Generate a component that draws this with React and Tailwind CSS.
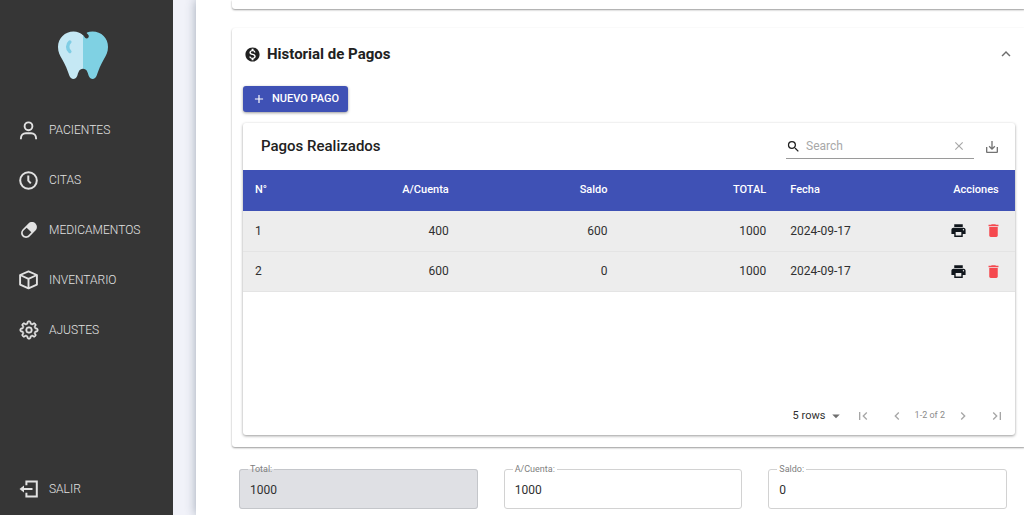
import { useState } from "react";
import { RiCapsuleFill } from "react-icons/ri";
import { GoGear } from "react-icons/go";
import {
  MdAdd,
  MdArrowDropDown,
  MdChevronLeft,
  MdChevronRight,
  MdClear,
  MdDelete,
  MdExpandLess,
  MdFirstPage,
  MdLastPage,
  MdMonetizationOn,
  MdPrint,
  MdSaveAlt,
  MdSearch,
} from "react-icons/md";

const PersonIcon = () => (
  <svg viewBox="0 0 20 20" className="size-5" fill="none" stroke="currentColor" strokeWidth="1.9">
    <circle cx="9.500" cy="6.300" r="3.900" />
    <path d="M1.900 19.300v-.800c0-3 2-5.200 5-5.200h5.200c3 0 5 2.200 5 5.200v.800" />
  </svg>
);

const ClockIcon = () => (
  <svg viewBox="0 0 20 20" className="size-5" fill="none" stroke="currentColor" strokeWidth="2">
    <circle cx="9.500" cy="10.500" r="8.300" />
    <path d="M9.300 5.500v5.200l2.500 2.700" />
  </svg>
);

const CubeIcon = () => (
  <svg viewBox="0 0 20 20" className="size-5" fill="none" stroke="currentColor" strokeWidth="1.9" strokeLinejoin="round">
    <path d="M9.500 1.400 17.900 5v9.600l-8.400 3.800-8.400-3.800V5z" />
    <path d="M1.100 5l8.400 3.800L17.900 5M9.500 8.800v9.600" />
  </svg>
);

const ExitIcon = () => (
  <svg viewBox="0 0 20 20" className="size-5" fill="none" stroke="currentColor" strokeWidth="2">
    <path d="M7.400 6.200V2.400h10.400v15.200H7.400v-3.800" />
    <path d="M4 10h9.500" />
    <path d="M5 6.400v7.200L.500 10z" fill="currentColor" stroke="none" />
  </svg>
);

const Logo = () => (
  <svg viewBox="0 0 52 50" className="h-[50px] w-[52px]">
    <path
      d="M26 5C23 3 20.500 1.500 16.500 1.500 8 1.500 1 8 1 17c0 5 1.800 8.500 4 12 3.300 5.500 5.500 11 7.300 16.500 1.500 4.500 6.300 4.500 7.900.500 1.200-3.500 1.800-7.200 5.800-7.200z"
      fill="#c5e8f4"
    />
    <path
      d="M26 5C28 3 31.500 1.500 35.500 1.500 44.500 1.500 51 8 51 17c0 5-1.800 8.500-4 12-3.300 5.500-5.500 11-7.300 16.500-1.500 4.500-6.300 4.500-7.900.500-1.200-3.500-1.800-7.200-5.800-7.200z"
      fill="#7fd1e3"
    />
    <path d="M24.500 3 26.500 0h5.500l-2.500 2.800c.500 1 1.700 1.500 2.200 2.700.700 2-1.500 3.800-3.400 2.500z" fill="#363636" />
    <path d="M12.800 12c-2.800 2.500-2.800 7 0 9.500" fill="none" stroke="#7fcde4" strokeWidth="3.500" strokeLinecap="round" />
  </svg>
);

const menu = [
  { label: "PACIENTES", icon: <PersonIcon /> },
  { label: "CITAS", icon: <ClockIcon /> },
  { label: "MEDICAMENTOS", icon: <RiCapsuleFill className="size-5" /> },
  { label: "INVENTARIO", icon: <CubeIcon /> },
  { label: "AJUSTES", icon: <GoGear className="size-5 stroke-current [stroke-width:0.7]" /> },
];

const pagos = [
  { id: 1, cuenta: 400, saldo: 600, total: 1000, fecha: "2024-09-17" },
  { id: 2, cuenta: 600, saldo: 0, total: 1000, fecha: "2024-09-17" },
];

const MenuLink = ({ icon, label }) => (
  <a href="#" className="flex h-5 items-center gap-2.5 text-xs font-light text-[#e2e2e2]">
    {icon}
    {label}
  </a>
);

const Sidebar = () => (
  <aside className="flex w-[173px] shrink-0 flex-col bg-[#363636] pt-[30px] pb-4">
    <div className="flex justify-center pr-2">
      <Logo />
    </div>
    <nav className="mt-10 flex grow flex-col gap-[30px] pl-[19px]">
      {menu.map((item) => (
        <MenuLink key={item.label} {...item} />
      ))}
      <div className="mt-auto">
        <MenuLink label="SALIR" icon={<ExitIcon />} />
      </div>
    </nav>
  </aside>
);

const Field = ({ id, label, value, disabled }) => (
  <fieldset className={`min-w-0 flex-1 rounded-[3px] border px-2 ${disabled ? "border-[#c4c6ca] bg-[#dfe0e4]" : "border-[#d2d2d2]"}`}>
    <legend className="h-3 px-0.5 text-[9px] leading-3 text-[#808080]">
      <label htmlFor={id}>{label}</label>
    </legend>
    <input
      id={id}
      defaultValue={value}
      disabled={disabled}
      className="block h-[33px] w-full bg-transparent px-0.5 pb-1 text-xs text-[#303030] outline-none"
    />
  </fieldset>
);

const PagosTable = () => {
  const [search, setSearch] = useState("");
  const rows = pagos.filter((p) => Object.values(p).join(" ").includes(search));

  return (
    <div className="mt-[11px] rounded-[3px] bg-white shadow-[0_1px_3px_rgba(0,0,0,0.4)]">
      <div className="flex h-[47px] items-center pr-[15px] pl-[18px]">
        <h3 className="grow text-[15px] font-medium text-[#212121]">Pagos Realizados</h3>
        <div className="flex h-6 w-[188px] items-center border-b border-[#9a9a9a]">
          <MdSearch className="size-[15px] text-[#202020]" />
          <input
            aria-label="Search"
            placeholder="Search"
            value={search}
            onChange={(e) => setSearch(e.target.value)}
            className="ml-[5px] w-0 grow text-xs outline-none placeholder:text-[#a8a8a8]"
          />
          <button type="button" aria-label="Clear" onClick={() => setSearch("")} className="mr-2 text-[#a8a8a8]">
            <MdClear className="size-[14px]" />
          </button>
        </div>
        <button type="button" aria-label="Export" className="ml-2.5 text-[#737373]">
          <MdSaveAlt className="size-4" />
        </button>
      </div>

      <div className="min-h-[227px]">
        <table className="w-full table-fixed border-collapse text-xs text-[#303030]">
          <thead>
            <tr className="h-[41px] bg-[#3f51b5] text-[11px] text-white [&>th]:px-3 [&>th]:font-medium">
              <th className="w-[59px] text-left">N°</th>
              <th className="text-right">A/Cuenta</th>
              <th className="text-right">Saldo</th>
              <th className="text-right">TOTAL</th>
              <th className="text-left">Fecha</th>
              <th className="w-[78px] text-center">Acciones</th>
            </tr>
          </thead>
          <tbody>
            {rows.map((p) => (
              <tr key={p.id} className="h-10 border-b border-[#e4e4e4] bg-[#ededed] [&>td]:px-3">
                <td>{p.id}</td>
                <td className="text-right">{p.cuenta}</td>
                <td className="text-right">{p.saldo}</td>
                <td className="text-right">{p.total}</td>
                <td>{p.fecha}</td>
                <td>
                  <div className="flex justify-center gap-[18px]">
                    <button type="button" aria-label="Imprimir" className="text-[#10161c]">
                      <MdPrint className="size-[17px]" />
                    </button>
                    <button type="button" aria-label="Eliminar" className="text-[#f5494f]">
                      <MdDelete className="size-[17px]" />
                    </button>
                  </div>
                </td>
              </tr>
            ))}
          </tbody>
        </table>
      </div>

      <div className="flex h-[38px] items-center justify-end pr-2.5 text-[#a6a6a6]">
        <div className="relative flex items-center">
          <select aria-label="Rows per page" className="h-[18px] w-[52px] appearance-none text-[11px] text-[#303030] outline-none">
            <option>5 rows</option>
          </select>
          <MdArrowDropDown className="pointer-events-none absolute right-0 size-[18px] text-[#6f6f6f]" />
        </div>
        <button type="button" aria-label="First Page" className="ml-2.5">
          <MdFirstPage className="size-4" />
        </button>
        <button type="button" aria-label="Previous Page" className="ml-[18px]">
          <MdChevronLeft className="size-4" />
        </button>
        <span className="ml-2.5 text-[9px] text-[#8c8c8c]">1-2 of 2</span>
        <button type="button" aria-label="Next Page" className="ml-2.5">
          <MdChevronRight className="size-4" />
        </button>
        <button type="button" aria-label="Last Page" className="ml-[18px]">
          <MdLastPage className="size-4" />
        </button>
      </div>
    </div>
  );
};

export default function App() {
  return (
    <div className="flex h-screen overflow-hidden bg-[#f1f2f9] font-['Roboto',sans-serif]">
      <Sidebar />
      <main className="ml-[23px] min-w-0 grow bg-white pl-9 shadow-[0_0_10px_rgba(60,80,100,0.45)]">
        <div className="-mr-0.5">
          <div className="h-[9px] rounded-b-[3px] shadow-[0_1px_2px_rgba(0,0,0,0.4)]" />

          <section className="mt-[19px] rounded-[3px] px-[11px] pb-3 shadow-[0_1px_2px_rgba(0,0,0,0.4)]">
            <div className="flex h-[52px] items-center pl-px">
              <MdMonetizationOn className="size-[17px] text-[#202020]" />
              <h2 className="ml-1.5 grow text-[15px] font-bold text-[#212121]">Historial de Pagos</h2>
              <button type="button" aria-label="Contraer" className="text-[#6c6c6c]">
                <MdExpandLess className="size-[18px]" />
              </button>
            </div>
            <button
              type="button"
              className="mt-1.5 flex h-[26px] items-center gap-1.5 rounded-[3px] bg-[#3f51b5] px-[9px] text-[11px] font-medium text-white shadow-[0_1px_3px_rgba(0,0,0,0.4)]"
            >
              <MdAdd className="size-[14px]" />
              NUEVO PAGO
            </button>
            <PagosTable />
          </section>
        </div>

        <div className="mt-4 mr-[17px] ml-[7px] flex gap-[26px]">
          <Field id="total" label="Total:" value="1000" disabled />
          <Field id="cuenta" label="A/Cuenta:" value="1000" />
          <Field id="saldo" label="Saldo:" value="0" />
        </div>
      </main>
    </div>
  );
}
